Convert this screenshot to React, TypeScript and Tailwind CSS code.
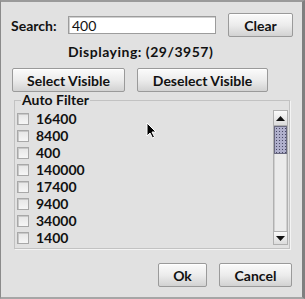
import React from "react";

const values = ["16400", "8400", "400", "140000", "17400", "9400", "34000", "1400"];

function Button({ label, className }: { label: string; className: string }) {
  return (
    <button
      className={`flex items-center justify-center rounded-[2px] border border-[#9a9a9a] bg-gradient-to-b from-[#fbfbfb] via-[#ececec] to-[#d2d2d2] text-[14px] font-bold text-[#111] shadow-[inset_0_1px_0_#fff] ${className}`}
    >
      {label}
    </button>
  );
}

function Checkbox() {
  return (
    <span className="block h-[12px] w-[12px] border border-[#a8a8a8] bg-gradient-to-b from-[#e6e6e6] to-[#f6f6f6] shadow-[inset_1px_1px_0_#c8c8c8]" />
  );
}

function Scrollbar() {
  return (
    <div className="flex h-[135px] w-[15px] flex-col border border-[#b0b0b0] bg-[#e6e6e6]">
      <div className="flex h-[15px] items-center justify-center border-b border-[#b0b0b0] bg-gradient-to-b from-[#fafafa] to-[#dcdcdc]">
        <svg width="9" height="5" viewBox="0 0 9 5">
          <path d="M0 5 L4.5 0 L9 5 Z" fill="#111" />
        </svg>
      </div>
      <div className="h-[28px] border border-[#6a6a80] bg-[#b0b0cc] bg-[radial-gradient(#4a4a66_0.5px,transparent_0.8px)] bg-[length:3px_3px]" />
      <div className="flex-1 border-x border-[#cfcfcf] bg-[#ebebeb]" />
      <div className="flex h-[13px] items-center justify-center border-t border-[#b0b0b0] bg-gradient-to-b from-[#fafafa] to-[#dcdcdc]">
        <svg width="9" height="5" viewBox="0 0 9 5">
          <path d="M0 0 L9 0 L4.5 5 Z" fill="#111" />
        </svg>
      </div>
    </div>
  );
}

export default function App() {
  return (
    <div
      className="relative h-[299px] w-[305px] overflow-hidden bg-[#e1e1e1] text-[#111]"
      style={{ fontFamily: 'Lato, "Liberation Sans", sans-serif' }}
    >
      <div className="flex h-full w-full flex-col border-l border-r-[3px] border-t-2 border-b-2 border-l-[#8a8a8a] border-r-[#7f7f7f] border-t-[#9a9a9a] border-b-[#a6a6a6]">
        {/* search row */}
        <div className="mt-[11px] flex h-[24px] items-center">
          <span className="ml-[10px] w-[57px] text-[14px] font-bold">Search:</span>
          <div className="flex h-[18px] w-[148px] items-center border border-[#9c9c9c] bg-white pl-[3px] text-[14px] shadow-[inset_1px_1px_0_#d0d0d0]">
            400
          </div>
          <Button label="Clear" className="ml-[12px] h-[24px] w-[65px]" />
        </div>

        <div className="ml-[67px] mt-[6px] h-[18px] text-[14px] font-bold leading-[18px] tracking-[0.5px]">
          Displaying: (29/3957)
        </div>

        <div className="ml-[11px] mt-[7px] flex gap-[12px]">
          <Button label="Select Visible" className="h-[24px] w-[113px]" />
          <Button label="Deselect Visible" className="h-[24px] w-[131px]" />
        </div>

        <fieldset className="ml-[13px] mt-[1px] h-[156px] w-[276px] border border-[#c2c2c2] pl-[2px] pr-[1px] shadow-[1px_1px_0_#f4f4f4]">
          <legend className="ml-[4px] px-[1px] text-[14px] font-bold leading-[14px]">Auto Filter</legend>
          <div className="mt-[3px] flex">
            <div className="flex flex-1 flex-col">
              {values.map((v) => (
                <div key={v} className="flex h-[17px] items-center gap-[7px]">
                  <Checkbox />
                  <span className="text-[14px] font-bold">{v}</span>
                </div>
              ))}
            </div>
            <Scrollbar />
          </div>
        </fieldset>

        <div className="ml-[157px] mt-[14px] flex gap-[12px]">
          <Button label="Ok" className="h-[24px] w-[49px]" />
          <Button label="Cancel" className="h-[24px] w-[73px]" />
        </div>
      </div>

      {/* mouse pointer */}
      <svg className="absolute left-[146px] top-[122px]" width="12" height="18" viewBox="0 0 12 18">
        <path d="M1 1 L1 14 L4 11 L6.5 16 L8.5 15 L6 10 L10 10 Z" fill="#000" stroke="#fff" strokeWidth="1" />
      </svg>
    </div>
  );
}
